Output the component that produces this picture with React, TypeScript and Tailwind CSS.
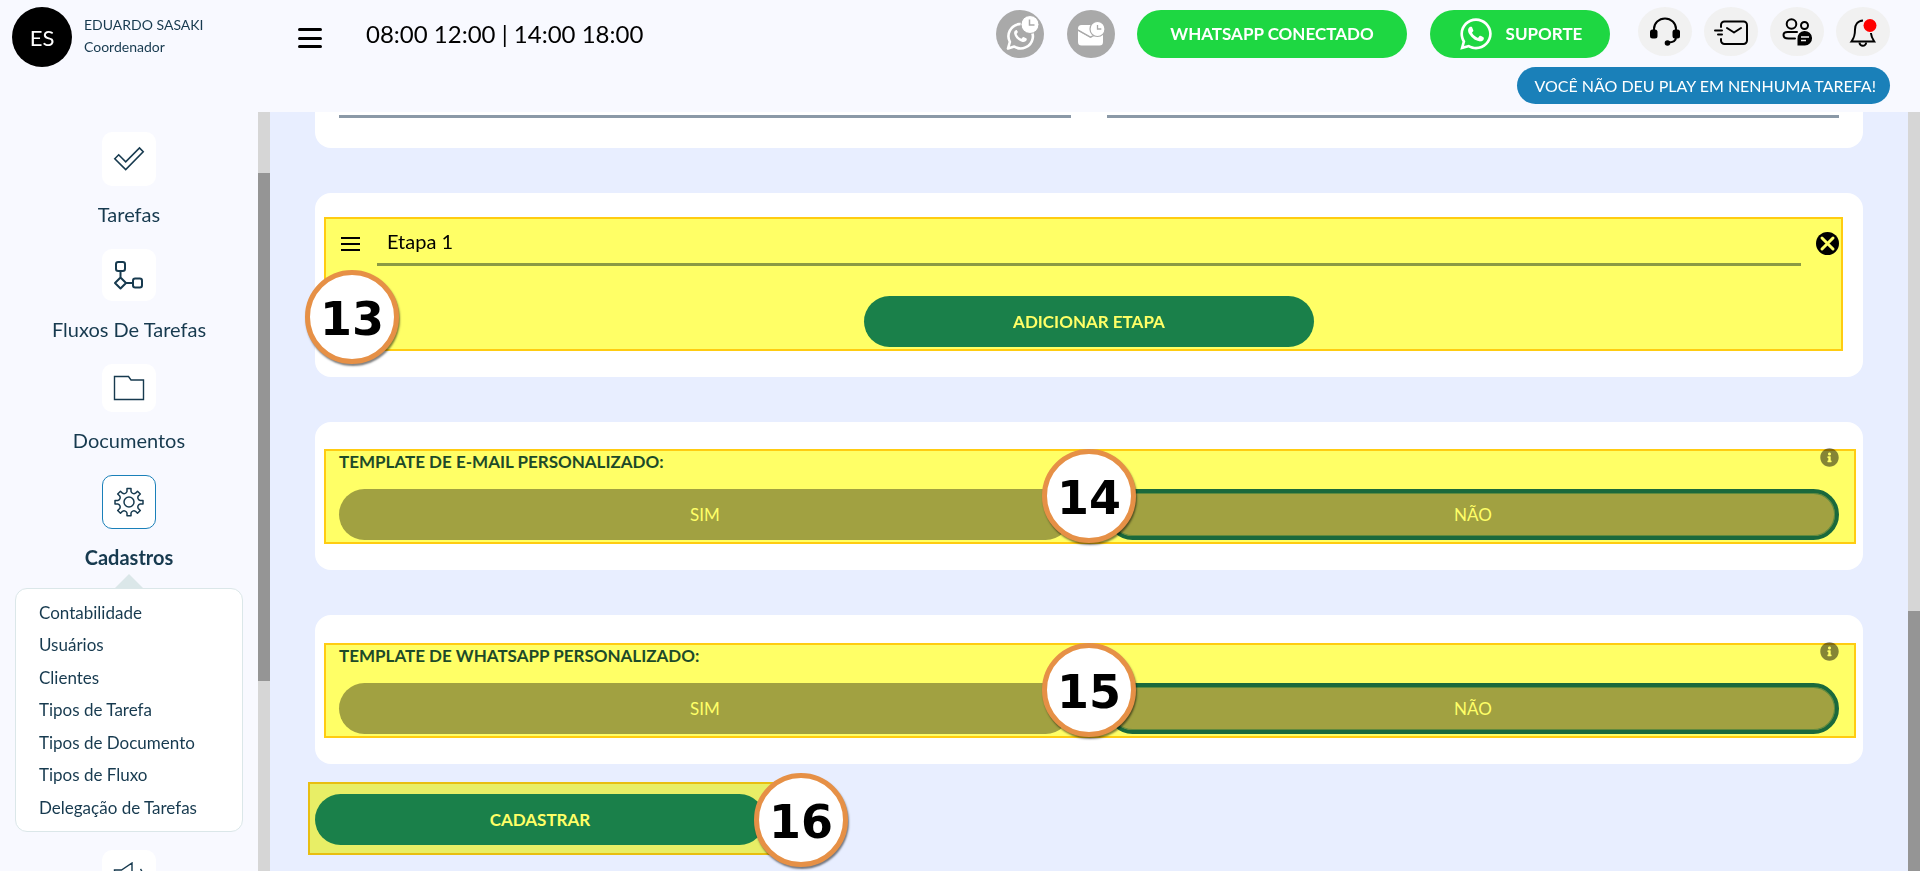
import { useState } from "react"
import type { ReactNode } from "react"
import clsx from "clsx"
import { FaInfoCircle, FaWhatsapp } from "react-icons/fa"

const submenu = [
  "Contabilidade",
  "Usuários",
  "Clientes",
  "Tipos de Tarefa",
  "Tipos de Documento",
  "Tipos de Fluxo",
  "Delegação de Tarefas",
]

export default function App() {
  return (
    <div className="flex h-screen flex-col overflow-hidden bg-[#f8f9ff] font-['Century_Gothic','Lato',sans-serif] text-[#173a4f]">
      <Header />
      <div className="flex min-h-0 flex-1">
        <Sidebar />
        <Scrollbar before="h-[61px]" thumb="h-[508px]" />
        <Content />
        <Scrollbar before="h-[499px]" thumb="flex-1" />
      </div>
    </div>
  )
}

function Header() {
  return (
    <header className="flex h-28 shrink-0 items-start justify-between pr-[30px] pl-3">
      <div className="flex pt-[7px]">
        <div className="flex size-[60px] items-center justify-center rounded-full bg-black text-[22px] text-white">ES</div>
        <div className="ml-3 w-[214px] pt-[7px] text-[14px] leading-[22px]">
          <p>EDUARDO SASAKI</p>
          <p>Coordenador</p>
        </div>
        <button type="button" aria-label="Menu" className="mt-[21px] flex h-5 w-6 flex-col justify-between">
          <span className="h-[3px] w-full rounded-full bg-black" />
          <span className="h-[3px] w-full rounded-full bg-black" />
          <span className="h-[3px] w-full rounded-full bg-black" />
        </button>
        <p className="mt-[11px] ml-11 text-[24px] leading-8 text-black">08:00 12:00 | 14:00 18:00</p>
      </div>

      <div className="flex flex-col items-end gap-[9px] pt-[7px]">
        <div className="flex items-start">
          <button type="button" aria-label="WhatsApp agendado" className="mt-[3px] mr-[23px] size-12 rounded-full bg-[#a9a9a9]">
            <WhatsappClockIcon />
          </button>
          <button type="button" aria-label="E-mail agendado" className="mt-[3px] mr-[22px] size-12 rounded-full bg-[#a9a9a9]">
            <MailClockIcon />
          </button>
          <button type="button" className="mt-[3px] mr-[23px] h-12 w-[270px] rounded-full bg-[#1ed742] text-[17px] font-bold text-white">
            WHATSAPP CONECTADO
          </button>
          <button type="button" className="mt-[3px] mr-7 flex h-12 w-[180px] items-center justify-center gap-3 rounded-full bg-[#1ed742] text-[17px] font-bold text-white">
            <FaWhatsapp size={36} />
            SUPORTE
          </button>
          <div className="flex gap-3">
            <RoundButton label="Atendimento">
              <HeadsetIcon />
            </RoundButton>
            <RoundButton label="Mensagens">
              <SendMailIcon />
            </RoundButton>
            <RoundButton label="Equipe">
              <TeamChatIcon />
            </RoundButton>
            <RoundButton label="Notificações">
              <BellIcon />
            </RoundButton>
          </div>
        </div>
        <button type="button" className="h-[37px] rounded-full bg-[#1a80b9] pr-[14px] pl-[17px] text-[16px] whitespace-nowrap text-white">
          VOCÊ NÃO DEU PLAY EM NENHUMA TAREFA!
        </button>
      </div>
    </header>
  )
}

function RoundButton({ label, children }: { label: string; children: ReactNode }) {
  return (
    <button type="button" aria-label={label} className="flex h-[49px] w-[54px] items-center justify-center rounded-[50%] bg-[#f1f1f1] text-black">
      {children}
    </button>
  )
}

function Sidebar() {
  return (
    <nav className="w-[258px] shrink-0 overflow-hidden pt-5">
      <NavItem label="Tarefas" box="h-[54px]">
        <CheckIcon />
      </NavItem>
      <NavItem label="Fluxos De Tarefas" box="h-[52px]">
        <FlowIcon />
      </NavItem>
      <NavItem label="Documentos" box="h-12">
        <FolderIcon />
      </NavItem>
      <NavItem label="Cadastros" box="h-[54px]" active>
        <GearIcon />
      </NavItem>

      <div className="mx-auto -mt-[18px] h-[14px] w-7 bg-[#dbe7e9] [clip-path:polygon(50%_0,100%_100%,0_100%)]" />
      <ul className="mx-[15px] mb-[18px] rounded-xl border border-[#dbe7e9] bg-white py-[7px]">
        {submenu.map((item) => (
          <li key={item} className="flex h-8 items-center pl-[23px] text-[17px] odd:h-[33px]">
            <a href="#">{item}</a>
          </li>
        ))}
      </ul>
      <a href="#" aria-label="Avisos" className="mx-auto flex h-[54px] w-[54px] items-center justify-center rounded-[10px] bg-white">
        <MegaphoneIcon />
      </a>
    </nav>
  )
}

function NavItem({ label, box, active, children }: { label: string; box: string; active?: boolean; children: ReactNode }) {
  return (
    <a href="#" className="mb-[23px] flex flex-col items-center gap-4">
      <span
        className={clsx(
          "flex w-[54px] items-center justify-center rounded-[10px] bg-white",
          box,
          active && "border border-[#1a80b9]",
        )}
      >
        {children}
      </span>
      <span className={clsx("text-[20px] leading-6", active && "font-bold")}>{label}</span>
    </a>
  )
}

function Scrollbar({ before, thumb }: { before: string; thumb: string }) {
  return (
    <div className="flex w-3 shrink-0 flex-col bg-[#d6d6d6]">
      <div className={before} />
      <div className={clsx("bg-[#959595]", thumb)} />
    </div>
  )
}

function Content() {
  const [step, setStep] = useState("Etapa 1")

  return (
    <main className="min-w-0 flex-1 overflow-hidden bg-[#e8eeff] px-[45px]">
      {/* Card scrolled partly under the header */}
      <section className="-mt-[66px] mb-[45px] grid grid-cols-2 gap-9 rounded-2xl bg-white px-6 pt-6 pb-[30px]">
        <input aria-label="Nome" className="h-12 border-b-3 border-[#8b99a7] outline-none" />
        <input aria-label="Departamento" className="h-12 border-b-3 border-[#8b99a7] outline-none" />
      </section>

      <section className="relative mb-[45px] rounded-2xl bg-white px-6 pt-6 pb-[30px]">
        <div className="flex items-center text-black">
          <button type="button" aria-label="Mover etapa" className="mt-1 ml-[2px] flex h-[14px] w-[19px] flex-col justify-between">
            <span className="h-[2px] w-full bg-black" />
            <span className="h-[2px] w-full bg-black" />
            <span className="h-[2px] w-full bg-black" />
          </button>
          <input
            aria-label="Etapa"
            value={step}
            onChange={(e) => setStep(e.target.value)}
            className="mr-[15px] ml-[17px] h-[49px] min-w-0 flex-1 border-b-3 border-[#8b99a7] px-[10px] pt-[2px] text-[20px] outline-none"
          />
          <button type="button" aria-label="Remover etapa" className="mt-1">
            <RemoveIcon />
          </button>
        </div>
        <button type="button" className="mx-auto mt-[30px] block h-[51px] w-[450px] rounded-full bg-[#1a80b9] text-[17px] font-bold text-white">
          ADICIONAR ETAPA
        </button>
        <Highlight className="top-6 right-5 bottom-[26px] left-[9px]" />
        <Marker className="top-[77px] -left-[10px]" value={13} />
      </section>

      <TemplateCard title="TEMPLATE DE E-MAIL PERSONALIZADO:" marker={14} className="mb-[45px] pt-[27px]" />
      <TemplateCard title="TEMPLATE DE WHATSAPP PERSONALIZADO:" marker={15} className="mb-[30px] pt-7" />

      <div className="relative w-[450px]">
        <button type="button" className="block h-[51px] w-full rounded-full bg-[#1a80b9] text-[17px] font-bold text-white">
          CADASTRAR
        </button>
        <Highlight className="-top-3 -right-8 -bottom-[10px] -left-[7px]" />
        <Marker className="-top-[21px] -right-[83px]" value={16} />
      </div>
    </main>
  )
}

function TemplateCard({ title, marker, className }: { title: string; marker: number; className: string }) {
  return (
    <section className={clsx("relative rounded-2xl bg-white px-6 pb-[30px]", className)}>
      <div className="-mt-px mb-3 flex h-[29px] items-start justify-between">
        <h2 className="text-[17px] leading-7 font-bold text-[#1d4a66]">{title}</h2>
        <FaInfoCircle size={19} className="text-[#858585]" />
      </div>
      <div className="grid grid-cols-2 gap-9">
        <button type="button" className="h-[51px] rounded-full bg-[#a1a1a1] text-[17px] text-white">
          SIM
        </button>
        <button type="button" className="h-[51px] rounded-full border-4 border-[#1a6996] bg-[#a1a1a1] text-[17px] text-white shadow-[inset_0_0_0_1px_#5f8a98]">
          NÃO
        </button>
      </div>
      <Highlight className="right-[7px] bottom-[26px] left-[9px] h-[95px]" />
      <Marker className="top-1/2 left-1/2 -translate-1/2" value={marker} />
    </section>
  )
}

function Highlight({ className }: { className: string }) {
  return (
    <div className={clsx("pointer-events-none absolute border-2 border-[#ffcc11] bg-[#ffff66] mix-blend-multiply", className)} />
  )
}

function Marker({ value, className }: { value: number; className: string }) {
  return (
    <div
      className={clsx(
        "absolute flex size-[94px] items-center justify-center rounded-full border-5 border-[#e69046] bg-white pt-1 font-['DejaVu_Sans',sans-serif] text-[46px] leading-none font-bold text-black shadow-[1px_2px_2px_rgba(0,0,0,0.5)]",
        className,
      )}
    >
      {value}
    </div>
  )
}

/* Icons */

function WhatsappClockIcon() {
  return (
    <svg viewBox="0 0 48 48" className="size-12" fill="none">
      <path d="M12 38.500l1.900-6.600A12.200 12.200 0 1 1 18.300 36.600z" stroke="#fff" strokeWidth="2.600" strokeLinejoin="round" />
      <path d="M20.200 20c-1.500.5-2.400 2-2 3.700.9 4 4.300 7.300 8.300 8.200 1.900.4 4-.6 4.300-2.300l-.2-1-3-1.500-.9.200-1.200 1.400c-2.200-.8-3.900-2.400-4.900-4.700l1.200-1.800-.1-.8-1-1.300z" fill="#fff" />
      <circle cx="34" cy="14.500" r="9" fill="#fff" stroke="#a9a9a9" strokeWidth="1" />
      <path d="M33.500 9.500v5.500h5" stroke="#a9a9a9" strokeWidth="1.500" />
    </svg>
  )
}

function MailClockIcon() {
  return (
    <svg viewBox="0 0 48 48" className="size-12" fill="none">
      <path d="M11 21v11a3.500 3.500 0 0 0 3.500 3.500h18A3.500 3.500 0 0 0 36 32V21L23.500 28z" fill="#fff" />
      <path d="M11 19.500v-1a3.500 3.500 0 0 1 3.500-3.500H26v11.300l-2.500 1z" fill="#fff" />
      <path d="M11 20l12.500 7 5-2.500" stroke="#a9a9a9" strokeWidth="1.200" />
      <circle cx="30.500" cy="19" r="7.500" fill="#fff" stroke="#a9a9a9" strokeWidth="1.200" />
      <path d="M30.500 15v4h3.800" stroke="#a9a9a9" strokeWidth="1.300" />
    </svg>
  )
}

function HeadsetIcon() {
  return (
    <svg width="32" height="30" viewBox="0 0 32 30" fill="none" stroke="currentColor" strokeWidth="2">
      <path d="M5 13v-1a11 10.500 0 0 1 22 0v1" />
      <path d="M27 20c0 4-3 5.500-8 5.500" />
      <rect x="1" y="12.500" width="7.500" height="9" rx="2.500" fill="currentColor" stroke="none" />
      <rect x="23.500" y="12.500" width="7.500" height="9" rx="2.500" fill="currentColor" stroke="none" />
      <circle cx="18.500" cy="26" r="2.800" fill="currentColor" stroke="none" />
    </svg>
  )
}

function SendMailIcon() {
  return (
    <svg width="36" height="26" viewBox="0 0 36 26" className="mt-[3px]" fill="none" stroke="currentColor" strokeWidth="2" strokeLinecap="round" strokeLinejoin="round">
      <path d="M8 7V5a3.500 3.500 0 0 1 3.500-3.500h19A3.500 3.500 0 0 1 34 5v15.500a3.500 3.500 0 0 1-3.500 3.500h-19A3.500 3.500 0 0 1 8 20.500V19" />
      <path d="M14 8l7 4.500L28 8M2 10.500h7M5 14.500h4" />
    </svg>
  )
}

function TeamChatIcon() {
  return (
    <svg width="32" height="30" viewBox="0 0 32 30" fill="none" stroke="currentColor" strokeWidth="2">
      <circle cx="10.500" cy="7" r="4.800" />
      <circle cx="23.500" cy="8.500" r="3.500" />
      <path d="M14 21.500H7.500C4 21.500 2.500 20 2.500 18s1.500-3 4-3H16" strokeLinecap="round" />
      <path d="M16.500 28.500V22a7.300 7.300 0 1 1 7.300 6.500z" fill="currentColor" stroke="none" />
      <path d="M20 20h8M20 23.500h5" stroke="#f1f1f1" strokeWidth="1.400" />
    </svg>
  )
}

function BellIcon() {
  return (
    <svg width="30" height="32" viewBox="0 0 30 32" fill="none" stroke="currentColor" strokeWidth="2">
      <path d="M15 4.500c-5.500.3-8 4.500-8 9 0 6.500-1 8.500-3.500 12h22.700c-2-3-2.900-4.500-3.300-8.500" />
      <path d="M11.500 26.500a3.300 3.300 0 0 0 6.600 0" />
      <circle cx="22" cy="9.500" r="6.500" fill="#ff0000" stroke="none" />
    </svg>
  )
}

function CheckIcon() {
  return (
    <svg width="32" height="32" viewBox="0 0 32 32" fill="none" stroke="currentColor" strokeWidth="1.600">
      <path d="M1.800 15.700L5.700 11.800l7 7L26.500 5l3.700 3.800L12.700 26.500z" />
    </svg>
  )
}

function FlowIcon() {
  return (
    <svg width="32" height="30" viewBox="0 0 32 30" fill="none" stroke="currentColor" strokeWidth="2">
      <rect x="3" y="2" width="9" height="9" rx="2.200" />
      <rect x="20" y="18.500" width="9" height="9" rx="2.200" />
      <path d="M7.500 11v6.500M13 23h7M7.500 17.500l5.500 5.500-5.500 5.500L2 23z" strokeLinejoin="round" />
    </svg>
  )
}

function FolderIcon() {
  return (
    <svg width="32" height="26" viewBox="0 0 32 26" fill="none" stroke="currentColor" strokeWidth="1.400">
      <path d="M1.500 1.500h14l2.500 3.500h12.500v19.500h-29z" />
    </svg>
  )
}

// Eight teeth with small rounded valleys between them
function GearIcon() {
  return (
    <svg width="30" height="30" viewBox="0 0 30 30" fill="none" stroke="currentColor" strokeWidth="1.500" strokeLinejoin="round">
      <path d="M13 1.500h4v2.800a3 3 0 0 0 4.500 1.900l2-2 2.800 2.800-2 2a3 3 0 0 0 1.900 4.500h2.800v3.500h-2.800a3 3 0 0 0-1.900 4.500l2 2-2.800 2.800-2-2a3 3 0 0 0-4.500 1.900v2.600h-4v-2.600a3 3 0 0 0-4.500-1.900l-2 2-2.800-2.800 2-2a3 3 0 0 0-1.900-4.500H1v-3.500h2.800a3 3 0 0 0 1.900-4.500l-2-2 2.800-2.800 2 2A3 3 0 0 0 13 4.300z" />
      <circle cx="15" cy="15" r="5" />
    </svg>
  )
}

function MegaphoneIcon() {
  return (
    <svg width="32" height="30" viewBox="0 0 32 30" fill="none" stroke="currentColor" strokeWidth="1.400">
      <path d="M1.500 8h7L19 1v27L8.500 21h-7z" />
      <path d="M27.500 7c3 4 3 11 0 15" />
    </svg>
  )
}

function RemoveIcon() {
  return (
    <svg width="23" height="23" viewBox="0 0 23 23" className="block" fill="none">
      <circle cx="11.500" cy="11.500" r="11.500" fill="#000" />
      <path d="M6 6l11 11M17 6L6 17" stroke="#fff" strokeWidth="3" strokeLinecap="round" />
    </svg>
  )
}
